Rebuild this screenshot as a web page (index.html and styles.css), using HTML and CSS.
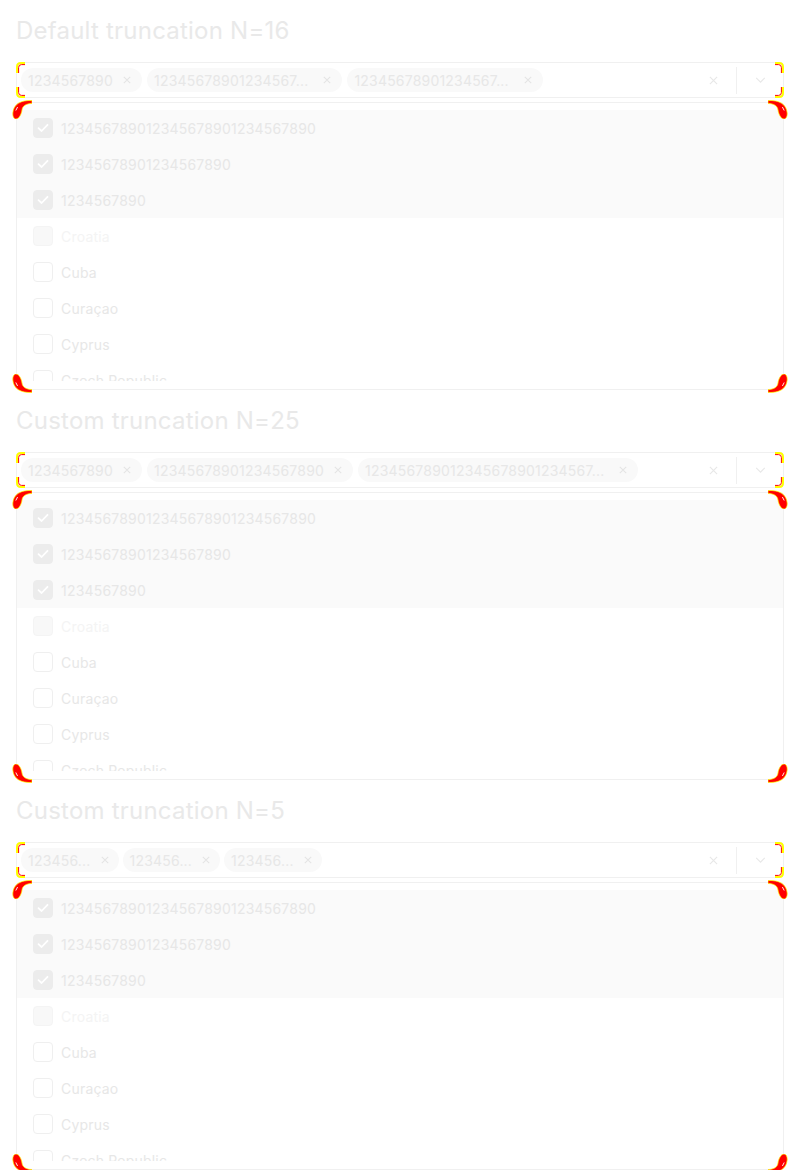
FILE: index.html
```html
<!DOCTYPE html>
<html lang="en">
<head>
<meta charset="utf-8">
<title>MultiSelect truncation</title>
<link rel="stylesheet" href="styles.css">
</head>
<body>
<svg class="defs" width="0" height="0" aria-hidden="true">
  <defs>
    <symbol id="crescent" viewBox="0 0 20 20">
      <path d="M20 1.5 C9 1 1.5 5 0.8 14 C0.6 17.5 2 20 4 20 C7 20 9.5 15 10 11 C10.5 7 14 4.5 20 4.5 Z" fill="#ff0000" stroke="#ffff00" stroke-width="0.7"/>
      <path d="M3.8 11.5 L5.6 8" stroke="#ffffff" stroke-width="0.9"/>
    </symbol>
    <symbol id="corner" viewBox="0 0 9 11">
      <path d="M9 1 L5 1 Q1 1 1 5 L1 11" fill="none" stroke="#ffff00" stroke-width="2"/>
      <path d="M9 2.6 L5.5 2.6 Q2.6 2.6 2.6 5.5 L2.6 11" fill="none" stroke="#ff0000" stroke-width="1"/>
    </symbol>
    <symbol id="xmark" viewBox="0 0 10 10">
      <path d="M1 1 L9 9 M9 1 L1 9" stroke="currentColor" stroke-width="1.3" fill="none"/>
    </symbol>
    <symbol id="check" viewBox="0 0 12 10">
      <path d="M1.5 5.2 L4.6 8 L10.5 1.8" stroke="#ffffff" stroke-width="1.8" fill="none" stroke-linecap="round" stroke-linejoin="round"/>
    </symbol>
    <symbol id="chevron" viewBox="0 0 12 7">
      <path d="M1 1 L6 6 L11 1" stroke="currentColor" stroke-width="1.3" fill="none"/>
    </symbol>
  </defs>
</svg>

<main class="page">

  <section class="demo">
    <h2 class="title">Default truncation N=16</h2>
    <div class="field">
      <div class="pills">
        <span class="pill"><span class="pill-label">1234567890</span><svg class="pill-x"><use href="#xmark"/></svg></span>
        <span class="pill"><span class="pill-label trunc">12345678901234567...</span><svg class="pill-x"><use href="#xmark"/></svg></span>
        <span class="pill"><span class="pill-label trunc">12345678901234567...</span><svg class="pill-x"><use href="#xmark"/></svg></span>
      </div>
      <div class="controls">
        <span class="clear"><svg class="clear-x"><use href="#xmark"/></svg></span>
        <span class="divider"></span>
        <span class="chev"><svg class="chev-icon"><use href="#chevron"/></svg></span>
      </div>
      <svg class="corner c-tl"><use href="#corner"/></svg>
      <svg class="corner c-tr"><use href="#corner"/></svg>
      <svg class="corner c-bl"><use href="#corner"/></svg>
      <svg class="corner c-br"><use href="#corner"/></svg>
    </div>
    <div class="dropdown">
      <div class="list">
        <div class="opt sel"><span class="cb on"><svg class="tick"><use href="#check"/></svg></span><span class="lbl">123456789012345678901234567890</span></div>
        <div class="opt sel"><span class="cb on"><svg class="tick"><use href="#check"/></svg></span><span class="lbl">12345678901234567890</span></div>
        <div class="opt sel"><span class="cb on"><svg class="tick"><use href="#check"/></svg></span><span class="lbl">1234567890</span></div>
        <div class="opt dis"><span class="cb off"></span><span class="lbl">Croatia</span></div>
        <div class="opt"><span class="cb"></span><span class="lbl">Cuba</span></div>
        <div class="opt"><span class="cb"></span><span class="lbl">Curaçao</span></div>
        <div class="opt"><span class="cb"></span><span class="lbl">Cyprus</span></div>
        <div class="opt"><span class="cb"></span><span class="lbl">Czech Republic</span></div>
      </div>
      <svg class="cres r-tl"><use href="#crescent"/></svg>
      <svg class="cres r-tr"><use href="#crescent"/></svg>
      <svg class="cres r-bl"><use href="#crescent"/></svg>
      <svg class="cres r-br"><use href="#crescent"/></svg>
    </div>
  </section>

  <section class="demo">
    <h2 class="title">Custom truncation N=25</h2>
    <div class="field">
      <div class="pills">
        <span class="pill"><span class="pill-label">1234567890</span><svg class="pill-x"><use href="#xmark"/></svg></span>
        <span class="pill"><span class="pill-label">12345678901234567890</span><svg class="pill-x"><use href="#xmark"/></svg></span>
        <span class="pill"><span class="pill-label trunc">123456789012345678901234567...</span><svg class="pill-x"><use href="#xmark"/></svg></span>
      </div>
      <div class="controls">
        <span class="clear"><svg class="clear-x"><use href="#xmark"/></svg></span>
        <span class="divider"></span>
        <span class="chev"><svg class="chev-icon"><use href="#chevron"/></svg></span>
      </div>
      <svg class="corner c-tl"><use href="#corner"/></svg>
      <svg class="corner c-tr"><use href="#corner"/></svg>
      <svg class="corner c-bl"><use href="#corner"/></svg>
      <svg class="corner c-br"><use href="#corner"/></svg>
    </div>
    <div class="dropdown">
      <div class="list">
        <div class="opt sel"><span class="cb on"><svg class="tick"><use href="#check"/></svg></span><span class="lbl">123456789012345678901234567890</span></div>
        <div class="opt sel"><span class="cb on"><svg class="tick"><use href="#check"/></svg></span><span class="lbl">12345678901234567890</span></div>
        <div class="opt sel"><span class="cb on"><svg class="tick"><use href="#check"/></svg></span><span class="lbl">1234567890</span></div>
        <div class="opt dis"><span class="cb off"></span><span class="lbl">Croatia</span></div>
        <div class="opt"><span class="cb"></span><span class="lbl">Cuba</span></div>
        <div class="opt"><span class="cb"></span><span class="lbl">Curaçao</span></div>
        <div class="opt"><span class="cb"></span><span class="lbl">Cyprus</span></div>
        <div class="opt"><span class="cb"></span><span class="lbl">Czech Republic</span></div>
      </div>
      <svg class="cres r-tl"><use href="#crescent"/></svg>
      <svg class="cres r-tr"><use href="#crescent"/></svg>
      <svg class="cres r-bl"><use href="#crescent"/></svg>
      <svg class="cres r-br"><use href="#crescent"/></svg>
    </div>
  </section>

  <section class="demo">
    <h2 class="title">Custom truncation N=5</h2>
    <div class="field">
      <div class="pills short">
        <span class="pill"><span class="pill-label">123456...</span><svg class="pill-x"><use href="#xmark"/></svg></span>
        <span class="pill"><span class="pill-label">123456...</span><svg class="pill-x"><use href="#xmark"/></svg></span>
        <span class="pill"><span class="pill-label">123456...</span><svg class="pill-x"><use href="#xmark"/></svg></span>
      </div>
      <div class="controls">
        <span class="clear"><svg class="clear-x"><use href="#xmark"/></svg></span>
        <span class="divider"></span>
        <span class="chev"><svg class="chev-icon"><use href="#chevron"/></svg></span>
      </div>
      <svg class="corner c-tl"><use href="#corner"/></svg>
      <svg class="corner c-tr"><use href="#corner"/></svg>
      <svg class="corner c-bl"><use href="#corner"/></svg>
      <svg class="corner c-br"><use href="#corner"/></svg>
    </div>
    <div class="dropdown">
      <div class="list">
        <div class="opt sel"><span class="cb on"><svg class="tick"><use href="#check"/></svg></span><span class="lbl">123456789012345678901234567890</span></div>
        <div class="opt sel"><span class="cb on"><svg class="tick"><use href="#check"/></svg></span><span class="lbl">12345678901234567890</span></div>
        <div class="opt sel"><span class="cb on"><svg class="tick"><use href="#check"/></svg></span><span class="lbl">1234567890</span></div>
        <div class="opt dis"><span class="cb off"></span><span class="lbl">Croatia</span></div>
        <div class="opt"><span class="cb"></span><span class="lbl">Cuba</span></div>
        <div class="opt"><span class="cb"></span><span class="lbl">Curaçao</span></div>
        <div class="opt"><span class="cb"></span><span class="lbl">Cyprus</span></div>
        <div class="opt"><span class="cb"></span><span class="lbl">Czech Republic</span></div>
      </div>
      <svg class="cres r-tl"><use href="#crescent"/></svg>
      <svg class="cres r-tr"><use href="#crescent"/></svg>
      <svg class="cres r-bl"><use href="#crescent"/></svg>
      <svg class="cres r-br"><use href="#crescent"/></svg>
    </div>
  </section>

</main>
</body>
</html>
```

FILE: styles.css
```css
* { box-sizing: border-box; }

html, body {
  margin: 0;
  padding: 0;
  background: #ffffff;
}

body {
  font-family: Inter, "Noto Sans", "Liberation Sans", sans-serif;
  color: #e7e7e7;
  overflow: hidden;
}

.defs {
  position: absolute;
  width: 0;
  height: 0;
  overflow: hidden;
}

.page {
  display: flex;
  flex-direction: column;
  gap: 15px;
  padding: 15px 16px 0;
}

.demo {
  display: flex;
  flex-direction: column;
}

.title {
  margin: 0 0 16px;
  font-size: 24px;
  line-height: 31px;
  font-weight: 400;
  letter-spacing: 0.22px;
  color: #e9e9e9;
}

/* input */
.field {
  position: relative;
  height: 36px;
  border: 1px solid #f0f0f0;
  border-radius: 4px;
  display: flex;
  align-items: center;
  padding-left: 4px;
}

.pills {
  flex: 1;
  display: flex;
  gap: 5px;
  align-items: center;
}

.pills.short {
  gap: 4px;
}

.pills.short .pill {
  padding-right: 7px;
}

.pill {
  display: inline-flex;
  align-items: center;
  height: 24px;
  padding: 0 8px 0 7px;
  border-radius: 12px;
  background: #f9f9f9;
  font-size: 14px;
  letter-spacing: 0.2px;
  color: #e7e7e7;
  white-space: nowrap;
}

.pill-label.trunc {
  padding-right: 5px;
}

.pill-x {
  width: 8px;
  height: 8px;
  margin: 0 3px 0 10px;
  color: #e4e4e4;
}

.controls {
  display: flex;
  align-items: center;
  height: 100%;
}

.clear {
  width: 24px;
  height: 24px;
  display: flex;
  align-items: center;
  justify-content: center;
  margin-right: 11px;
  color: #e8e8e8;
}

.clear-x {
  width: 9px;
  height: 9px;
}

.divider {
  width: 1px;
  height: 27px;
  background: #f0f0f0;
}

.chev {
  width: 46px;
  display: flex;
  justify-content: center;
  color: #e8e8e8;
}

.chev-icon {
  width: 11px;
  height: 6px;
}

/* dropdown */
.dropdown {
  position: relative;
  margin-top: 4px;
  height: 288px;
  border: 1px solid #f0f0f0;
  border-radius: 4px;
  padding: 7px 0 8px;
}

.list {
  height: 271px;
  overflow: hidden;
}

.opt {
  height: 36px;
  display: flex;
  align-items: center;
  gap: 8px;
  padding-left: 16px;
  font-size: 14px;
  letter-spacing: 0.2px;
  color: #e7e7e7;
}

.opt.sel {
  background: #fafafa;
}

.opt.dis {
  color: #f4f4f4;
}

.cb {
  width: 20px;
  height: 20px;
  flex: none;
  border: 1px solid #efefef;
  border-radius: 4px;
  background: #ffffff;
  display: flex;
  align-items: center;
  justify-content: center;
}

.cb.on {
  background: #ececec;
  border-color: #ececec;
}

.cb.off {
  background: #f8f8f8;
  border-color: #f4f4f4;
}

.tick {
  width: 12px;
  height: 10px;
}

/* corner artifacts */
.corner {
  position: absolute;
  width: 9px;
  height: 11px;
}
.c-tl { left: -1px; top: -1px; }
.c-tr { right: -1px; top: -1px; transform: scaleX(-1); }
.c-bl { left: -1px; bottom: -1px; transform: scaleY(-1); }
.c-br { right: -1px; bottom: -1px; transform: scale(-1, -1); }

.cres {
  position: absolute;
  width: 20px;
  height: 20px;
}
.r-tl { left: -5px; top: -4px; }
.r-tr { right: -5px; top: -4px; transform: scaleX(-1); }
.r-bl { left: -5px; bottom: -5px; transform: scaleY(-1); }
.r-br { right: -5px; bottom: -5px; transform: scale(-1, -1); }
```
